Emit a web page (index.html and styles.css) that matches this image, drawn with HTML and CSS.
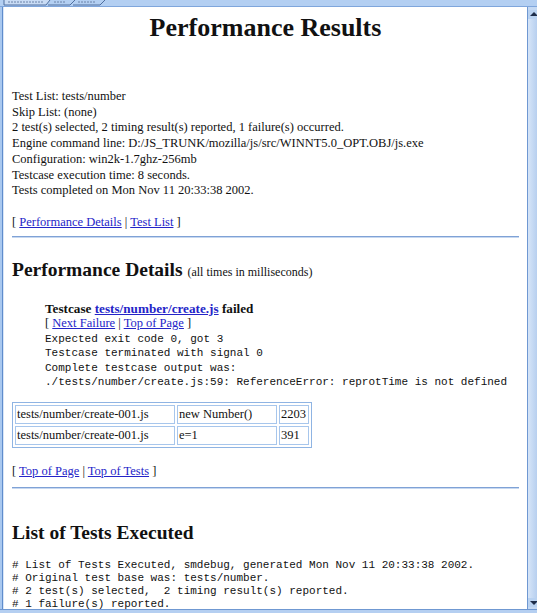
FILE: index.html
```html
<!DOCTYPE html>
<html>
<head>
<meta charset="utf-8">
<title>Performance Results</title>
<link rel="stylesheet" href="styles.css">
</head>
<body>
<div class="window">
  <div class="tabbar">
    <svg class="tabs" width="537" height="7" viewBox="0 0 537 7">
      <rect x="0" y="0" width="537" height="7" fill="#b3cff2"/>
      <path d="M4 0 V5 H46 L50 0" fill="#c9dcf5" stroke="#4f6f9f" stroke-width="1"/>
      <path d="M48 5 H70 L75 0" fill="none" stroke="#4f6f9f" stroke-width="1"/>
      <path d="M73 5 H100 L105 0" fill="none" stroke="#4f6f9f" stroke-width="1"/>
      <path d="M8 2 H44 M54 2 H66 M78 2 H96" stroke="#6b82a8" stroke-width="1" stroke-dasharray="2 1"/>
      <line x1="0" y1="6.5" x2="537" y2="6.5" stroke="#7fa6dc" stroke-width="1"/>
    </svg>
  </div>
  <div class="frame">
    <div class="edge-left"></div>
    <div class="page">
      <h1 class="title">Performance Results</h1>
      <div class="summary">
        Test List: tests/number<br>
        Skip List: (none)<br>
        2 test(s) selected, 2 timing result(s) reported, 1 failure(s) occurred.<br>
        Engine command line: D:/JS_TRUNK/mozilla/js/src/WINNT5.0_OPT.OBJ/js.exe<br>
        Configuration: win2k-1.7ghz-256mb<br>
        Testcase execution time: 8 seconds.<br>
        Tests completed on Mon Nov 11 20:33:38 2002.
      </div>
      <p class="nav">[ <a href="#details">Performance Details</a> | <a href="#list">Test List</a> ]</p>
      <hr class="rule">
      <h2 class="section" id="details">Performance Details <span class="note">(all times in milliseconds)</span></h2>
      <div class="failure">
        <div class="fail-title">Testcase <a href="#create">tests/number/create.js</a> failed</div>
        <div class="fail-nav">[ <a href="#next">Next Failure</a> | <a href="#top">Top of Page</a> ]</div>
        <pre class="output">Expected exit code 0, got 3
Testcase terminated with signal 0
Complete testcase output was:
./tests/number/create.js:59: ReferenceError: reprotTime is not defined</pre>
      </div>
      <table class="results">
        <tr><td class="c-file">tests/number/create-001.js</td><td class="c-name">new Number()</td><td class="c-time">2203</td></tr>
        <tr><td class="c-file">tests/number/create-001.js</td><td class="c-name">e=1</td><td class="c-time">391</td></tr>
      </table>
      <p class="nav nav-bottom">[ <a href="#top">Top of Page</a> | <a href="#tests">Top of Tests</a> ]</p>
      <hr class="rule rule-bottom">
      <h2 class="section list-title" id="list">List of Tests Executed</h2>
      <pre class="list"># List of Tests Executed, smdebug, generated Mon Nov 11 20:33:38 2002.
# Original test base was: tests/number.
# 2 test(s) selected,  2 timing result(s) reported.
# 1 failure(s) reported.</pre>
    </div>
    <div class="scrollbar">
      <div class="arrow arrow-up"></div>
      <div class="track"></div>
      <div class="arrow arrow-down"></div>
    </div>
  </div>
  <div class="edge-bottom"></div>
</div>
</body>
</html>
```

FILE: styles.css
```css
html, body {
  margin: 0;
  padding: 0;
  background: #ffffff;
}

.window {
  width: 537px;
  height: 613px;
  display: grid;
  grid-template-rows: 7px 1fr 4px;
  overflow: hidden;
  background: #ffffff;
}

.tabbar {
  height: 7px;
  overflow: hidden;
  line-height: 0;
}

.tabs {
  display: block;
}

.frame {
  display: flex;
  min-height: 0;
  overflow: hidden;
}

.edge-left {
  width: 4px;
  flex: none;
  background: linear-gradient(to right, #a9c8ef 0, #a9c8ef 2px, #5f8ccc 2px, #5f8ccc 3px, #d9e6f7 3px);
}

.page {
  flex: 1;
  min-width: 0;
  overflow: hidden;
  padding: 0 8px;
  font-family: "Liberation Serif", "Times New Roman", serif;
  font-size: 12.5px;
  line-height: 15.7px;
  color: #111111;
}

.page a {
  color: #2424c8;
  text-decoration: underline;
}

.title {
  margin: 6px 0 0;
  font-size: 26px;
  line-height: 30px;
  font-weight: bold;
  text-align: center;
}

.summary {
  margin-top: 46px;
}

.nav {
  margin: 16px 0 0;
}

.rule {
  margin: 5px 0 0;
  height: 0;
  border: 0;
  border-top: 1px solid #7fa2d6;
  border-bottom: 1px solid #c7d8f0;
}

.section {
  margin: 21px 0 0;
  font-size: 19.5px;
  line-height: 22px;
  font-weight: bold;
}

.note {
  font-size: 12px;
  font-weight: normal;
}

.failure {
  margin-top: 18px;
  padding-left: 33px;
}

.fail-title {
  font-weight: bold;
  font-size: 13.2px;
}

.output {
  margin: 0;
  font-family: "Liberation Mono", "Courier New", monospace;
  font-size: 11px;
  line-height: 14.4px;
}

.results {
  margin-top: 12px;
  border: 1px solid #8fb4e3;
  border-spacing: 2px;
}

.results td {
  border: 1px solid #a7c6ec;
  padding: 0 1px;
  height: 17px;
  line-height: 17px;
  white-space: nowrap;
}

.c-file { width: 156px; }
.c-name { width: 96px; }
.c-time { width: 26px; }

.nav-bottom {
  margin-top: 16px;
}

.rule-bottom {
  margin-top: 8px;
}

.list-title {
  margin-top: 33px;
}

.list {
  margin: 15px 0 0;
  font-family: "Liberation Mono", "Courier New", monospace;
  font-size: 11px;
  line-height: 12.8px;
}

.scrollbar {
  width: 9px;
  flex: none;
  display: flex;
  flex-direction: column;
  background: #c4d9f4;
  border-left: 1px solid #6f98d2;
}

.arrow {
  height: 9px;
  flex: none;
  position: relative;
  background: #b9d2f1;
}

.arrow-up {
  margin-top: 3px;
}

.arrow-up::after,
.arrow-down::after {
  content: "";
  position: absolute;
  left: 2px;
  width: 0;
  height: 0;
  border-left: 4px solid transparent;
  border-right: 4px solid transparent;
}

.arrow-up::after {
  top: 2px;
  border-bottom: 4px solid #1d2d4a;
}

.arrow-down::after {
  top: 3px;
  border-top: 4px solid #1d2d4a;
}

.track {
  flex: 1;
  background: linear-gradient(to right, #d6e5f8, #b7cfef);
}

.arrow-down {
  margin-bottom: 2px;
}

.edge-bottom {
  background: linear-gradient(to bottom, #6f98d2 0, #6f98d2 1px, #b5cff1 1px);
}
```
